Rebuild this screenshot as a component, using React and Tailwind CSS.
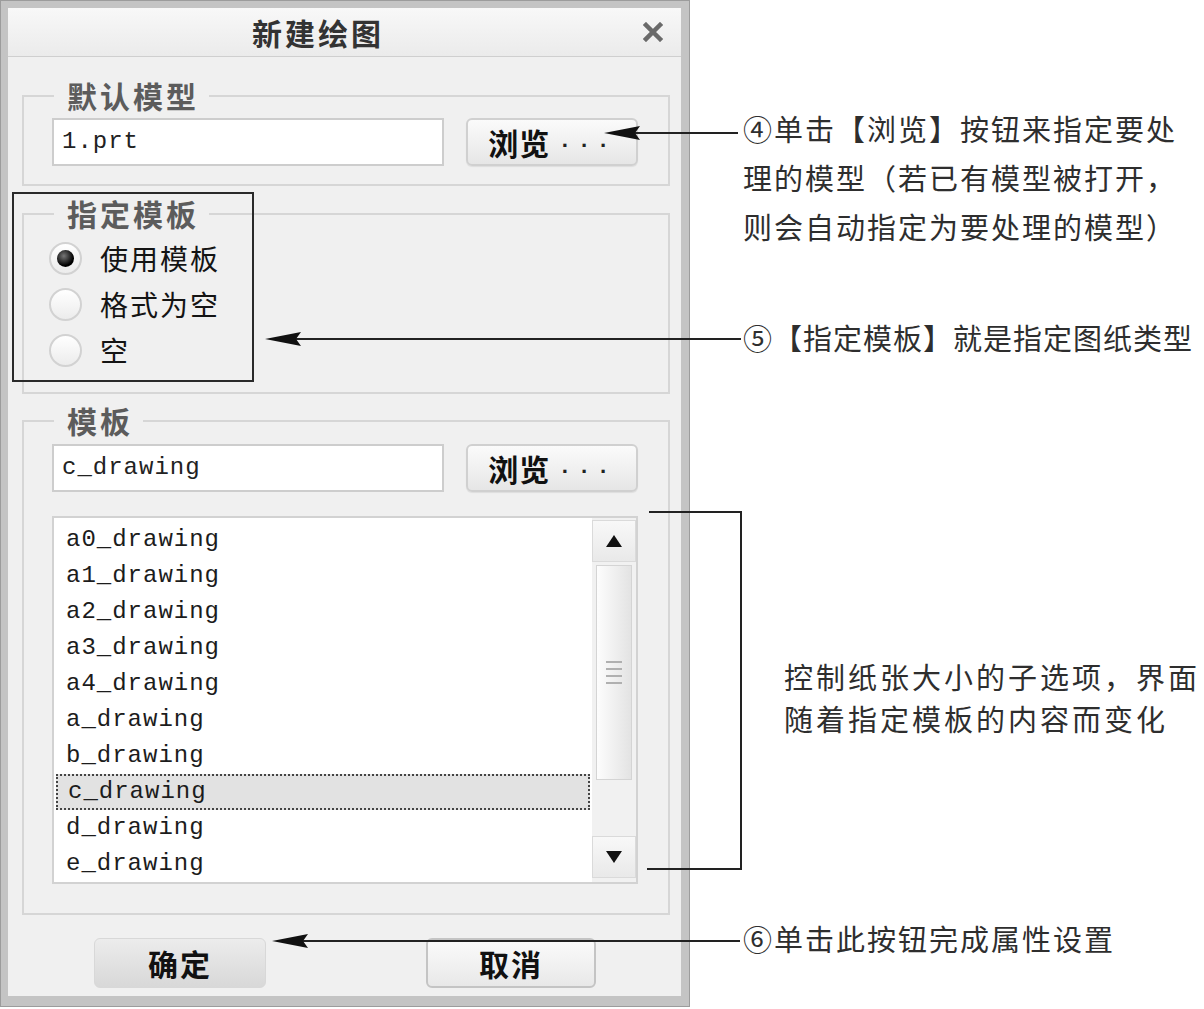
import React from 'react';

const CJK = "font-['Noto_Sans_CJK_SC',sans-serif]";
const MONO = "font-['Liberation_Mono','Noto_Sans_CJK_SC',monospace]";

const TEMPLATES = [
  'a0_drawing',
  'a1_drawing',
  'a2_drawing',
  'a3_drawing',
  'a4_drawing',
  'a_drawing',
  'b_drawing',
  'c_drawing',
  'd_drawing',
  'e_drawing',
];

function GroupBox({ title, className = '', bodyClass = '', children }) {
  return (
    <div className={`mx-[11px] ml-[14px] ${className}`}>
      <div className="flex h-[30px]">
        <div className="mt-[15px] h-[15px] w-[32px] border-l-2 border-t-2 border-[#d6d6d6]" />
        <span className={`${CJK} px-[13px] pr-[10px] text-[30px] font-bold leading-[30px] tracking-[3px] text-[#5c5c5c]`}>
          {title}
        </span>
        <div className="mt-[15px] h-[15px] flex-1 border-r-2 border-t-2 border-[#d6d6d6]" />
      </div>
      <div className={`border-x-2 border-b-2 border-[#d6d6d6] ${bodyClass}`}>{children}</div>
    </div>
  );
}

function TextField({ value }) {
  return (
    <div className={`${MONO} flex h-[48px] w-[392px] items-center border-2 border-[#cdcdcd] bg-white pl-[8px] text-[24px] tracking-[1px] text-[#222]`}>
      {value}
    </div>
  );
}

function BrowseButton() {
  return (
    <button className="ml-[22px] flex h-[48px] w-[172px] items-center justify-center rounded-[6px] border-2 border-[#d0d0d0] bg-gradient-to-b from-[#fbfbfb] to-[#e6e6e6] shadow-[0_1px_1px_rgba(0,0,0,0.08)]">
      <span className={`${CJK} text-[30px] font-bold leading-none tracking-[1px] text-[#111]`}>浏览</span>
      <span className={`${MONO} ml-[8px] text-[22px] font-bold leading-none tracking-[6px] text-[#222]`}>...</span>
    </button>
  );
}

function Radio({ label, checked }) {
  return (
    <div className="flex h-[46px] items-center">
      <span className="flex h-[33px] w-[33px] items-center justify-center rounded-full border-2 border-[#d2d2d2] bg-gradient-to-b from-[#ffffff] to-[#ececec]">
        {checked && (
          <span className="h-[17px] w-[17px] rounded-full bg-[radial-gradient(circle_at_40%_35%,#777,#000_65%)]" />
        )}
      </span>
      <span className={`${CJK} ml-[18px] text-[28px] leading-none tracking-[2px] text-[#141414]`}>{label}</span>
    </div>
  );
}

function Triangle({ up }) {
  return (
    <svg width="18" height="14" viewBox="0 0 18 14">
      {up ? <polygon points="9,1 17,13 1,13" fill="#111" /> : <polygon points="1,1 17,1 9,13" fill="#111" />}
    </svg>
  );
}

function Scrollbar() {
  return (
    <div className="flex w-[44px] flex-col bg-[#f1f1f1] pt-[2px] pb-[4px]">
      <div className="flex h-[42px] items-center justify-center border border-[#dadada] bg-gradient-to-b from-[#f8f8f8] to-[#e9e9e9]">
        <Triangle up />
      </div>
      <div className="mx-[4px] mt-[3px] flex h-[215px] items-center justify-center border border-[#d4d4d4] bg-gradient-to-r from-[#fdfdfd] to-[#e3e3e3]">
        <div className="flex w-[16px] flex-col gap-[5px]">
          <span className="h-[2px] bg-[#b0b0b0]" />
          <span className="h-[2px] bg-[#b0b0b0]" />
          <span className="h-[2px] bg-[#b0b0b0]" />
          <span className="h-[2px] bg-[#b0b0b0]" />
        </div>
      </div>
      <div className="flex-1" />
      <div className="flex h-[42px] items-center justify-center border border-[#dadada] bg-gradient-to-b from-[#f8f8f8] to-[#e9e9e9]">
        <Triangle />
      </div>
    </div>
  );
}

function TemplateList() {
  return (
    <div className="mt-[24px] flex h-[368px] w-[586px] border-2 border-[#d2d2d2] bg-white">
      <div className="flex-1 px-[2px] pt-[4px]">
        {TEMPLATES.map((t) => (
          <div
            key={t}
            className={`${MONO} flex h-[36px] items-center pl-[10px] text-[24px] tracking-[1px] text-[#1c1c1c] ${
              t === 'c_drawing' ? 'border-2 border-dotted border-[#444] bg-[#e2e2e2] pl-[8px]' : ''
            }`}
          >
            {t}
          </div>
        ))}
      </div>
      <Scrollbar />
    </div>
  );
}

function Dialog() {
  return (
    <div className="h-[1007px] w-[690px] shrink-0 border border-[#9c9c9c] bg-[#c4c4c4] pt-[7px] pl-[7px] pr-[8px] pb-[10px]">
      <div className="flex h-full flex-col bg-[#f0f0f0]">
        <div className="flex h-[49px] items-center border-b border-[#cfcfcf] bg-gradient-to-b from-[#f8f8f8] to-[#ebebeb] pl-[244px] pr-[18px]">
          <span className={`${CJK} text-[30px] font-bold leading-none tracking-[3px] text-[#333]`}>新建绘图</span>
          <svg className="ml-auto" width="20" height="20" viewBox="0 0 20 20">
            <path d="M3 3 L17 17 M17 3 L3 17" stroke="#6a6a6a" strokeWidth="4.5" strokeLinecap="square" />
          </svg>
        </div>

        <GroupBox title="默认模型" className="mt-[23px]" bodyClass="flex pl-[28px] pr-[30px] pt-[8px] pb-[18px]">
          <TextField value="1.prt" />
          <BrowseButton />
        </GroupBox>

        <GroupBox title="指定模板" className="mt-[12px]" bodyClass="pl-[25px] pt-[7px] pb-[19px]">
          <Radio label="使用模板" checked />
          <Radio label="格式为空" />
          <Radio label="空" />
        </GroupBox>

        <GroupBox title="模板" className="mt-[11px]" bodyClass="pl-[28px] pr-[30px] pt-[9px] pb-[29px]">
          <div className="flex">
            <TextField value="c_drawing" />
            <BrowseButton />
          </div>
          <TemplateList />
        </GroupBox>

        <div className="mt-[23px] flex pl-[86px]">
          <button className={`${CJK} h-[50px] w-[172px] rounded-[6px] border border-[#d8d8d8] bg-gradient-to-b from-[#ececec] to-[#d8d8d8] text-[30px] font-bold tracking-[2px] text-[#111]`}>
            确定
          </button>
          <button className={`${CJK} ml-[160px] h-[50px] w-[170px] rounded-[6px] border-2 border-[#c4c4c4] bg-gradient-to-b from-[#fbfbfb] to-[#e8e8e8] text-[30px] font-bold tracking-[2px] text-[#111]`}>
            取消
          </button>
        </div>
      </div>
    </div>
  );
}

function Notes() {
  const t = `${CJK} text-[29px] text-[#2e2e2e]`;
  return (
    <div className="flex flex-col pl-[53px]">
      <p className={`${t} mt-[104px] leading-[49px] tracking-[2px]`}>
        ④单击【浏览】按钮来指定要处
        <br />
        理的模型（若已有模型被打开，
        <br />
        则会自动指定为要处理的模型）
      </p>
      <p className={`${t} mt-[62px] leading-[49px] tracking-[1px] whitespace-nowrap`}>⑤【指定模板】就是指定图纸类型</p>
      <p className={`${t} mt-[293px] ml-[41px] leading-[42px] tracking-[3px] whitespace-nowrap`}>
        控制纸张大小的子选项，界面
        <br />
        随着指定模板的内容而变化
      </p>
      <p className={`${t} mt-[175px] leading-[49px] tracking-[2px]`}>⑥单击此按钮完成属性设置</p>
    </div>
  );
}

function Arrows() {
  const head = (x, y) => `${x},${y} ${x + 36},${y - 7} ${x + 31},${y} ${x + 36},${y + 7}`;
  return (
    <svg className="pointer-events-none absolute inset-0" width="1204" height="1009">
      <g stroke="#222" strokeWidth="2" fill="none">
        <line x1="630" y1="133" x2="738" y2="133" />
        <line x1="292" y1="339" x2="741" y2="339" />
        <polyline points="649,512 741,512 741,869 647,869" />
        <line x1="300" y1="941" x2="740" y2="941" />
      </g>
      <g fill="#111">
        <polygon points={head(604, 133)} />
        <polygon points={head(265, 339)} />
        <polygon points={head(272, 941)} />
      </g>
    </svg>
  );
}

export default function App() {
  return (
    <div className="relative h-[1009px] w-[1204px] overflow-hidden bg-white">
      <div className="flex">
        <Dialog />
        <Notes />
      </div>
      <div className="pointer-events-none absolute left-[12px] top-[192px] h-[190px] w-[242px] border-2 border-[#2a2a2a]" />
      <Arrows />
    </div>
  );
}
